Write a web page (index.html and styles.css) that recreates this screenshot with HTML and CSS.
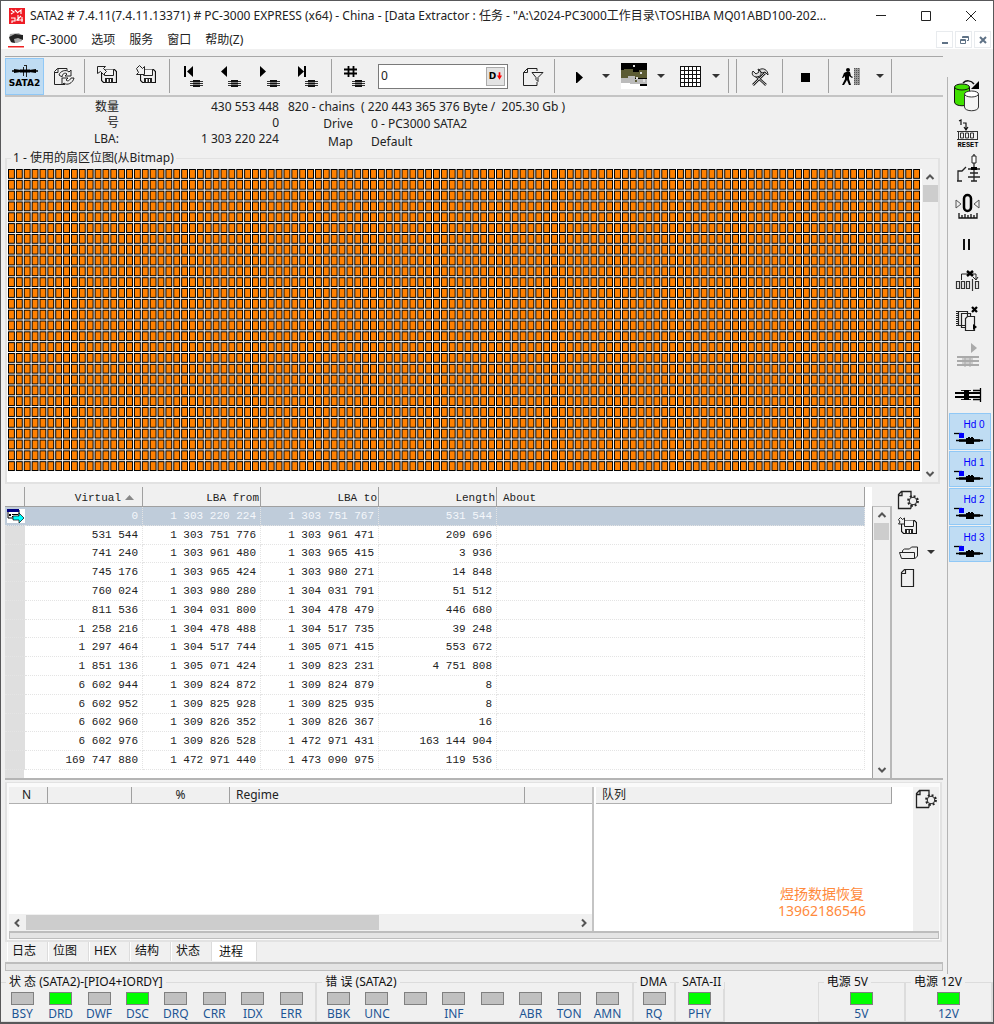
FILE: index.html
```html
<!DOCTYPE html>
<html lang="zh-CN">
<head>
<meta charset="utf-8">
<title>PC-3000 Data Extractor</title>
<link rel="stylesheet" href="styles.css">
</head>
<body>
<svg class="defs" aria-hidden="true">
  <defs>
    <symbol id="chip" viewBox="0 0 13 9"><path d="M0 2.500h13M0 4.500h13M0 6.500h13" stroke="#333"/><path d="M3 1h7v7H3z" fill="#111"/><path d="M3 3.500h7M3 5.500h7" stroke="#999" stroke-width=".8"/></symbol>
    <symbol id="floppy" viewBox="0 0 16 16"><path d="M.5 1.500h13l2 2v11h-13l-2-2z" fill="#f0f0f0" stroke="#111" stroke-width="1.200"/><path d="M3.500 1.500v6h9v-6" fill="#f6f6f6" stroke="#222"/><path d="M4 10h8v5H4z" fill="#222"/><path d="M6 11h1.500v3H6zM9 11h1v3H9z" fill="#fff"/></symbol>
    <symbol id="pagegear" viewBox="0 0 22 20"><path d="M14 18.500H1.500V4.500l3-3H14V7M1.500 5.500h3.500V1.500M14 15v3.500" fill="none" stroke="#222" stroke-width="1.300"/><circle cx="16" cy="11" r="4.800" fill="none" stroke="#222" stroke-width="2.200" stroke-dasharray="1.900 1.870"/><circle cx="16" cy="11" r="3.800" fill="#f0f0f0" stroke="#222"/></symbol>
    <symbol id="hdd" viewBox="0 0 30 14"><path d="M0 2.500h8" stroke="#000" stroke-width="1.300"/><path d="M2 9.500h27" stroke="#000" stroke-width="1.500"/><path d="M5 9.500h7M20 9.500h6" stroke="#000" stroke-width="2.600"/><path d="M5 2h5v5H5z" fill="#00f"/><path d="M12 7h2V6h2v1h1V6h2v1h1v6h-8z" fill="#000"/></symbol>
    <pattern id="cell" width="8" height="11" patternUnits="userSpaceOnUse"><rect width="8" height="11" fill="#fff"/><rect width="7" height="10" fill="#000"/><rect x="1" y="1" width="5" height="8" fill="#ff8000"/></pattern>
  </defs>
</svg>
<div class="window">
  <header class="titlebar">
    <svg class="app-icon" viewBox="0 0 16 16"><path d="M0 0h16v16H0z" fill="#ee1c25"/><path d="M2 2l3 2-3 2M6 2l2 2M8 5l4-3v4M2 10h4v3H3v2M9 7v6M12 8l-4 4h6M13 9v5" fill="none" stroke="#fff" stroke-width="1.100"/></svg>
    <h1>SATA2 # 7.4.11(7.4.11.13371) # PC-3000 EXPRESS (x64) - China - [Data Extractor : 任务 - "A:\2024-PC3000工作目录\TOSHIBA MQ01ABD100-202...</h1>
    <div class="window-buttons">
      <button aria-label="最小化"><svg viewBox="0 0 12 12"><path d="M1 5.500h10" stroke="#222"/></svg></button>
      <button aria-label="最大化"><svg viewBox="0 0 12 12"><path d="M1.500 1.500h9v9h-9z" fill="none" stroke="#222"/></svg></button>
      <button aria-label="关闭"><svg viewBox="0 0 12 12"><path d="M1 1l10 10M11 1L1 11" stroke="#222"/></svg></button>
    </div>
  </header>
  <nav class="menubar">
    <svg class="app-icon" viewBox="0 0 16 16"><path d="M2 2l9-1 3 3v5l-5 2H4L1 7z" fill="#aaa"/><path d="M1 5l6-3 8 1v5l-5-2-4 1 1 4-4-1z" fill="#222"/><path d="M0 14h16v1.500H0z" fill="#e22"/></svg>
    <button>PC-3000</button><button>选项</button><button>服务</button><button>窗口</button><button>帮助(Z)</button>
    <div class="mdi-buttons">
      <button aria-label="最小化子窗口"><svg viewBox="0 0 10 10"><path d="M2 8h6" stroke="#5f7286" stroke-width="2"/></svg></button>
      <button aria-label="还原子窗口"><svg viewBox="0 0 10 10"><path d="M3.500 3V1.500h6v4H8M1.500 4.500h5v4h-5zM1 5.500h6M3 2.500h6" fill="none" stroke="#5f7286"/></svg></button>
      <button aria-label="关闭子窗口"><svg viewBox="0 0 10 10"><path d="M2 2l6 6M8 2L2 8" stroke="#5f7286" stroke-width="2"/></svg></button>
    </div>
  </nav>

  <div class="middle">
    <main class="work">
      <div class="toolbar">
        <div class="group g-port">
          <button class="tool active port"><svg viewBox="0 0 26 14"><path d="M0 7h26" stroke="#000" stroke-width="1.500"/><path d="M2 5l7 1v2l-7 1zM24 5l-7 1v2l7 1z" fill="#000"/><path d="M11.500 3v9M14.500 1v12M12 1.500h3" stroke="#222"/><path d="M8 7h10" stroke="#000" stroke-width="3"/></svg><span>SATA2</span></button>
          <button class="tool" aria-label="刷新"><svg viewBox="0 0 30 30"><path d="M18 9.500V7.500H8.500l-3 3v13H16M5.500 11.500H9v-4" fill="none" stroke="#222"/><path d="M10 14c1-4 7-6 10-3l2-2v6h-6l2-2c-2-2-5 0-5 3zM25 17c-1 5-7 8-10 5l-2 2v-7h6l-2 2c2 2 4 0 5-2z" fill="#f0f0f0" stroke="#222"/></svg></button>
        </div>
        <div class="group g-save">
          <button class="tool" aria-label="保存"><svg viewBox="0 0 30 30"><use href="#floppy" x="8" y="7" width="16" height="16"/><path d="M4.500 5.500h8l-2 2 3 3-3 3-3-3-3 2z" fill="#f0f0f0" stroke="#222"/></svg></button>
          <button class="tool" aria-label="载入"><svg viewBox="0 0 30 30"><use href="#floppy" x="8" y="7" width="16" height="16"/><path d="M4.500 7.500l3-3 3 3 2-2v8h-8l2-2z" fill="#f0f0f0" stroke="#222"/></svg></button>
        </div>
        <div class="group g-nav">
          <button class="tool" aria-label="第一个"><svg viewBox="0 0 30 30"><path d="M7 5h2v11H7zM16 5v11l-6-5.500z"/><use href="#chip" x="13" y="18" width="13" height="9"/></svg></button>
          <button class="tool" aria-label="上一个"><svg viewBox="0 0 30 30"><path d="M11 5v11L5 10.500z"/><use href="#chip" x="12" y="18" width="13" height="9"/></svg></button>
          <button class="tool" aria-label="下一个"><svg viewBox="0 0 30 30"><path d="M5 5v11l6-5.500z"/><use href="#chip" x="12" y="18" width="13" height="9"/></svg></button>
          <button class="tool" aria-label="最后一个"><svg viewBox="0 0 30 30"><path d="M4 5v11l6-5.500zM10 5h2v11h-2z"/><use href="#chip" x="11" y="18" width="13" height="9"/></svg></button>
        </div>
        <div class="group g-lba">
          <button class="tool" aria-label="编号"><svg viewBox="0 0 30 30"><path d="M9.500 5v11M14.500 5v11M5 8.500h13M5 12.500h13" stroke="#000" stroke-width="1.800"/><use href="#chip" x="13" y="18" width="13" height="9"/></svg></button>
          <div class="field"><input type="text" value="0" aria-label="扇区编号"><button>D<svg viewBox="0 0 6 9"><path d="M2 0h2v4h2L3 9 0 4h2z" fill="#f00"/></svg></button></div>
          <button class="tool" aria-label="筛选"><svg viewBox="0 0 30 30"><path d="M19 10V7.500H9.500l-4 4v13H19V21M5.500 11.500h4v-4" fill="none" stroke="#222"/><path d="M14 11.500h11l-5 5v4l-2-2v-2z" fill="#f0f0f0" stroke="#222"/></svg></button>
        </div>
        <div class="group g-run">
          <button class="tool" aria-label="运行"><svg viewBox="0 0 30 30"><path d="M12 11v11h1l6-5.500-6-5.500z"/></svg></button>
          <button class="drop" aria-label="运行选项"></button>
          <button class="tool" aria-label="地图"><svg viewBox="0 0 30 30"><path d="M2 2h26v26H2z" fill="#000"/><path d="M2 9h3V8h9v3h6V9h8v8H2z" fill="#5b5b34"/><path d="M2 17h7v-2h7v3h12v5H2z" fill="#bbb"/><path d="M2 22h9v1h10v2h7v3H2z" fill="#fff"/><path d="M14 4h2v2h-2zM21 11h2v2h-2zM17 16h2v2h-2zM24 18h2v3h-2z" fill="#ddd"/><path d="M16 19h2v2h-2zM23 15h2v2h-2z" fill="#5b5b34"/></svg></button>
          <button class="drop" aria-label="地图选项"></button>
          <button class="tool" aria-label="网格"><svg viewBox="0 0 30 30"><path d="M6 5h20v20H6z" fill="#fff"/><path d="M6.500 5v21M10.500 5v21M14.500 5v21M18.500 5v21M22.500 5v21M26.500 5v21M6 5.500h21M6 9.500h21M6 13.500h21M6 17.500h21M6 21.500h21M6 25.500h21" stroke="#111"/></svg></button>
          <button class="drop" aria-label="网格选项"></button>
        </div>
        <div class="group g-gap"></div>
        <div class="group g-one"><button class="tool" aria-label="工具"><svg viewBox="0 0 30 30"><path d="M8 24L20 12M10 14l11 10" stroke="#222" stroke-width="2.500"/><path d="M8 24L20 12M11 15l10 9" stroke="#eee" stroke-width=".8"/><path d="M8 10l3 3 3-2-1-3c3 1 4 5 2 7l-3 1c-4 0-6-3-4-6zM14 9c4-3 9 0 9 5l-3-3-3 1z" fill="#ddd" stroke="#222"/></svg></button></div>
        <div class="group g-one"><button class="tool" aria-label="停止"><svg viewBox="0 0 30 30"><path d="M10 12h9v9h-9z"/></svg></button></div>
        <div class="group g-exit">
          <button class="tool" aria-label="退出"><svg viewBox="0 0 30 30"><circle cx="11" cy="9" r="2"/><path d="M9 11h4l1 4 2 1-1 1-3-2v3l2 6h-2l-2-5-3 5H5l3-6v-3l-2 2H5l2-5z"/><path d="M17 7h6v17h-6z" fill="#999"/><path d="M17.500 7v17M19.500 7v17M21.500 7v17" stroke="#555" stroke-dasharray="1 1"/></svg></button>
          <button class="drop" aria-label="退出选项"></button>
        </div>
      </div>

      <section class="info">
        <dl class="info-left"><dt>数量</dt><dd>430 553 448</dd><dt>号</dt><dd>0</dd><dt>LBA:</dt><dd>1 303 220 224</dd></dl>
        <div class="info-right">
          <p>820 - chains  ( 220 443 365 376 Byte /  205.30 Gb )</p>
          <dl><dt>Drive</dt><dd>0 - PC3000 SATA2</dd><dt>Map</dt><dd>Default</dd></dl>
        </div>
      </section>

      <fieldset class="bitmap">
        <legend>1 - 使用的扇区位图(从Bitmap)</legend>
        <div class="bitmap-body">
          <div class="cells"><svg viewBox="0 0 928 308" preserveAspectRatio="none" role="img" aria-label="扇区位图"><rect width="928" height="308" fill="url(#cell)"/></svg></div>
          <div class="vscroll"><svg viewBox="0 0 10 10"><path d="M1.500 7L5 3.500 8.500 7"/></svg><i></i><svg viewBox="0 0 10 10"><path d="M1.500 3L5 6.500 8.500 3"/></svg></div>
        </div>
      </fieldset>

      <section class="chains">
        <div class="table-wrap">
          <table>
            <colgroup><col class="c-mark"><col class="c-num"><col class="c-num"><col class="c-num"><col class="c-num"><col></colgroup>
            <thead><tr><th></th><th>Virtual<svg class="sort" viewBox="0 0 9 5"><path d="M0 5h9L4.500 0z" fill="#888"/></svg></th><th>LBA from</th><th>LBA to</th><th>Length</th><th>About</th></tr></thead>
            <tbody>
              <tr class="selected"><td><svg class="marker" viewBox="0 0 18 14"><path d="M0 0h18v14H0z" fill="#fff"/><path d="M1 1h11v8H1z" fill="#fff" stroke="#000"/><path d="M0 0h12v3H0z" fill="#000080"/><path d="M2 5h2v2H2zM5 5h6v1H5zM5 7h6v1H5z"/><path d="M6 7h6V4l5 5-5 5v-3H6z" fill="#0ff" stroke="#000" stroke-width=".7"/></svg></td><td>0</td><td>1 303 220 224</td><td>1 303 751 767</td><td>531 544</td><td></td></tr>
              <tr><td></td><td>531 544</td><td>1 303 751 776</td><td>1 303 961 471</td><td>209 696</td><td></td></tr>
              <tr><td></td><td>741 240</td><td>1 303 961 480</td><td>1 303 965 415</td><td>3 936</td><td></td></tr>
              <tr><td></td><td>745 176</td><td>1 303 965 424</td><td>1 303 980 271</td><td>14 848</td><td></td></tr>
              <tr><td></td><td>760 024</td><td>1 303 980 280</td><td>1 304 031 791</td><td>51 512</td><td></td></tr>
              <tr><td></td><td>811 536</td><td>1 304 031 800</td><td>1 304 478 479</td><td>446 680</td><td></td></tr>
              <tr><td></td><td>1 258 216</td><td>1 304 478 488</td><td>1 304 517 735</td><td>39 248</td><td></td></tr>
              <tr><td></td><td>1 297 464</td><td>1 304 517 744</td><td>1 305 071 415</td><td>553 672</td><td></td></tr>
              <tr><td></td><td>1 851 136</td><td>1 305 071 424</td><td>1 309 823 231</td><td>4 751 808</td><td></td></tr>
              <tr><td></td><td>6 602 944</td><td>1 309 824 872</td><td>1 309 824 879</td><td>8</td><td></td></tr>
              <tr><td></td><td>6 602 952</td><td>1 309 825 928</td><td>1 309 825 935</td><td>8</td><td></td></tr>
              <tr><td></td><td>6 602 960</td><td>1 309 826 352</td><td>1 309 826 367</td><td>16</td><td></td></tr>
              <tr><td></td><td>6 602 976</td><td>1 309 826 528</td><td>1 472 971 431</td><td>163 144 904</td><td></td></tr>
              <tr><td></td><td>169 747 880</td><td>1 472 971 440</td><td>1 473 090 975</td><td>119 536</td><td></td></tr>
            </tbody>
          </table>
        </div>
        <div class="chain-scroll vscroll"><svg viewBox="0 0 10 10"><path d="M1.500 7L5 3.500 8.500 7"/></svg><i></i><svg viewBox="0 0 10 10"><path d="M1.500 3L5 6.500 8.500 3"/></svg></div>
        <div class="side-tools">
          <button aria-label="新建"><svg viewBox="0 0 22 20"><use href="#pagegear"/></svg></button>
          <button aria-label="载入链表"><svg viewBox="0 0 22 20"><use href="#floppy" x="4" y="3" width="16" height="16"/><path d="M1.500 3.500l2-2 2 2 2-1.500v6h-6l1.500-2z" fill="#f0f0f0" stroke="#222"/></svg></button>
          <button aria-label="打开"><svg viewBox="0 0 22 20"><path d="M5.500 10V8.500l2-1.500h5l2-2h6v9l-3 3" fill="none" stroke="#222"/><path d="M2.500 10.500h15v6h-13z" fill="none" stroke="#222"/></svg><span class="caret"></span></button>
          <button aria-label="空白页"><svg viewBox="0 0 22 20"><path d="M4.500 18.500v-14l3-3h9v17zM5 5.500h3.500V2" fill="none" stroke="#222" stroke-width="1.200"/></svg></button>
        </div>
      </section>

      <section class="process">
        <div class="lists">
          <div class="list jobs">
            <div class="list-head"><span>N</span><span></span><span>%</span><span>Regime</span><span></span></div>
            <div class="list-body"></div>
            <div class="hscroll"><svg viewBox="0 0 10 10"><path d="M7 1.500L3.500 5 7 8.500"/></svg><i></i><svg viewBox="0 0 10 10"><path d="M3 1.500L6.500 5 3 8.500"/></svg></div>
          </div>
          <div class="list queue">
            <div class="list-head"><span>队列</span></div>
            <div class="list-body"><p>煜扬数据恢复<br>13962186546</p></div>
          </div>
          <div class="queue-tools"><button aria-label="新建任务"><svg viewBox="0 0 22 20"><use href="#pagegear"/></svg></button></div>
        </div>
        <div class="splitter"></div>
      </section>

      <div class="tabs" role="tablist">
        <button role="tab">日志</button><button role="tab">位图</button><button role="tab">HEX</button><button role="tab">结构</button><button role="tab">状态</button><button role="tab" aria-selected="true">进程</button>
      </div>
      <div class="splitter"></div>
    </main>

    <aside class="rail">
      <div class="rail-list">
        <button aria-label="复制磁盘"><svg viewBox="0 0 42 36"><path d="M5.500 9v15c0 5 15 5 15 0V9" fill="#40e000" stroke="#111"/><ellipse cx="13" cy="9" rx="7.500" ry="3" fill="#40e000" stroke="#111"/><path d="M15.500 16v13c0 5 14 5 14 0V16" fill="#f4f4f4" stroke="#333"/><ellipse cx="22.500" cy="16" rx="7" ry="3" fill="#fff" stroke="#333"/><path d="M14 5c3-3 8-3 11 1" fill="none" stroke="#111" stroke-width="1.500"/><path d="M30 3v8h-8z"/></svg></button>
        <button aria-label="复位"><svg viewBox="0 0 42 36"><path d="M10 6l2-1v5M14 8h3v6M15 12l2 3 2-3" fill="none" stroke="#111" stroke-width="1.200"/><path d="M8 16.500h21M8 24.500h21M9.500 16v8M28.500 16v8" stroke="#333"/><path d="M11.500 18h3v5h-3zM16.500 18h3v5h-3zM21.500 18h3v5h-3z" fill="none" stroke="#333"/><text x="19" y="32" text-anchor="middle" class="reset-text">RESET</text></svg></button>
        <button aria-label="电源"><svg viewBox="0 0 42 36"><path d="M9 29v-10h4l4-4M8 29h5M25 2v3M25 11v18M19 17h12M21 21h8M19 25h12M22 29h6" stroke="#222" fill="none" stroke-width="1.300"/><path d="M23 4h4v7h-4z" fill="#fff" stroke="#222"/><path d="M22 15h6v3h-6z"/></svg></button>
        <button aria-label="校准"><svg viewBox="0 0 42 36"><rect x="15" y="5" width="7" height="16" rx="3.500" fill="none" stroke="#000" stroke-width="2.500"/><path d="M7 10l5 4-5 4zM30 10l-5 4 5 4z" fill="#eee" stroke="#555"/><path d="M10 23v5h18v-5M13 25v3M16 24v4M19 25v3M22 24v4M25 25v3" fill="none" stroke="#111" stroke-width="1.300"/></svg></button>
        <button aria-label="暂停"><svg viewBox="0 0 42 36"><path d="M14 12h2v11h-2zM19 12h2v11h-2z" fill="#111"/></svg></button>
        <button aria-label="跳过"><svg viewBox="0 0 42 36"><path d="M12.500 15V9H27v5M24 12l3 3 2-3" fill="none" stroke="#222"/><path d="M18 6l6 5M24 6l-6 5" stroke="#000" stroke-width="2.500"/><path d="M7.500 16.500h3v7h-3zM12.500 16.500h3v7h-3zM17.500 16.500h3v7h-3zM26.500 16.500h3v7h-3zM23.500 14v12" fill="none" stroke="#333" stroke-width="1.200"/></svg></button>
        <button aria-label="清除副本"><svg viewBox="0 0 42 36"><path d="M9.500 9.500h9v14h-9zM12.500 11.500h9v14h-9z" fill="#f0f0f0" stroke="#222" stroke-width="1.200"/><path d="M16.500 28.500v-12l2-2h7v14z" fill="#f0f0f0" stroke="#222" stroke-width="1.200"/><path d="M8 9v16" stroke="#222" stroke-width="2" stroke-dasharray="1 1"/><path d="M23 5l5 5M28 5l-5 5" stroke="#000" stroke-width="2.300"/><path d="M24 22l4 3-4 3z"/></svg></button>
        <button aria-label="开始" disabled><svg viewBox="0 0 42 36"><path d="M22 4v10l6-5z" fill="#aaa"/><path d="M8 18h22M8 22h22M8 26h22" stroke="#aaa" stroke-width="2"/><path d="M13 20h11M13 24h11" stroke="#aaa"/><path d="M16 17v11M21 17v11" stroke="#aaa"/></svg></button>
        <button aria-label="连接"><svg viewBox="0 0 42 36"><path d="M6 16h26M6 20h26" stroke="#000" stroke-width="2"/><path d="M12 13.500h10M12 22.500h10" stroke="#222"/><path d="M15 13h5v10h-5z"/><path d="M24 13.500h8M24 22.500h8M31.500 11v14" stroke="#000" stroke-width="1.300"/></svg></button>
        <button class="head"><span>Hd 0</span><svg viewBox="0 0 30 14"><use href="#hdd"/></svg></button>
        <button class="head"><span>Hd 1</span><svg viewBox="0 0 30 14"><use href="#hdd"/></svg></button>
        <button class="head"><span>Hd 2</span><svg viewBox="0 0 30 14"><use href="#hdd"/></svg></button>
        <button class="head"><span>Hd 3</span><svg viewBox="0 0 30 14"><use href="#hdd"/></svg></button>
      </div>
    </aside>
  </div>

  <footer class="status">
    <fieldset class="s-eight"><legend>状 态 (SATA2)-[PIO4+IORDY]</legend>
      <div class="leds"><span class="led">BSY</span><span class="led on">DRD</span><span class="led">DWF</span><span class="led on">DSC</span><span class="led">DRQ</span><span class="led">CRR</span><span class="led">IDX</span><span class="led">ERR</span></div></fieldset>
    <fieldset class="s-eight"><legend>错 误 (SATA2)</legend>
      <div class="leds"><span class="led">BBK</span><span class="led">UNC</span><span class="led"></span><span class="led">INF</span><span class="led"></span><span class="led">ABR</span><span class="led">TON</span><span class="led">AMN</span></div></fieldset>
    <fieldset class="s-dma"><legend>DMA</legend><div class="leds"><span class="led">RQ</span></div></fieldset>
    <fieldset class="s-sata"><legend>SATA-II</legend><div class="leds"><span class="led on">PHY</span></div></fieldset>
    <fieldset class="s-power first"><legend>电源 5V</legend><div class="leds"><span class="led on">5V</span></div></fieldset>
    <fieldset class="s-power"><legend>电源 12V</legend><div class="leds"><span class="led on">12V</span></div></fieldset>
  </footer>
</div>
</body>
</html>
```
FILE: styles.css
```css
* { box-sizing: border-box; }
body {
  margin: 0;
  background: #f0f0f0;
  color: #222;
  font: 12px/16px "Noto Sans", "Noto Sans CJK SC", sans-serif;
}
button, input { font: inherit; color: inherit; margin: 0; padding: 0; }
button { border: 0; background: none; }
dl, dd, p, h1 { margin: 0; }
svg { display: block; flex: none; }
fieldset { margin: 0; min-width: 0; }
.defs { position: absolute; width: 0; height: 0; }

.window {
  min-height: 100vh;
  display: flex;
  flex-direction: column;
  border: 1px solid #58585a;
  border-bottom-width: 2px;
}

/* title and menu */
.titlebar { display: flex; align-items: center; height: 29px; padding-left: 8px; background: #fff; }
.app-icon { width: 16px; height: 16px; }
h1 { flex: 1; min-width: 0; margin-left: 5px; font-size: 12px; font-weight: 400; white-space: nowrap; overflow: hidden; }
.window-buttons { display: flex; }
.window-buttons button { width: 45px; height: 28px; display: grid; place-items: center; }
.window-buttons svg { width: 12px; height: 12px; }
.menubar { display: flex; align-items: center; height: 19px; padding-left: 7px; background: #fff; }
.menubar > button { margin-right: 14px; white-space: nowrap; }
.menubar > .app-icon { margin-right: 7px; }
.mdi-buttons { display: flex; gap: 2px; margin-left: auto; padding-right: 2px; }
.mdi-buttons button { width: 17px; height: 17px; border: 1px solid #e8ebee; display: grid; place-items: center; }
.mdi-buttons svg { width: 10px; height: 10px; }

.middle { flex: 1; display: flex; }
.work { flex: 1; min-width: 0; display: flex; flex-direction: column; padding: 7px 1px 0 4px; }

/* toolbar */
.toolbar { display: flex; height: 41px; border-top: 1px solid #a8a8a8; border-bottom: 2px solid #c4c4c4; padding: 1px 0; }
.group { display: flex; align-items: center; justify-content: center; border-right: 1px solid #a0a0a0; margin: 1px 0; }
.g-port { width: 80px; justify-content: flex-start; }
.g-save { width: 85px; }
.g-nav { width: 162px; }
.g-lba { width: 223px; gap: 5px; }
.g-run { width: 174px; }
.g-gap { width: 8px; }
.g-one { width: 46px; }
.g-exit { width: 63px; }
.tool { width: 39px; height: 37px; display: grid; place-items: center; flex: none; }
.tool svg { width: 30px; height: 30px; }
.tool.active { background: #bfdcf3; border: 1px solid #90c8f6; }
.tool.port { align-content: center; font: bold 9px/10px "DejaVu Sans", sans-serif; color: #000; }
.tool.port svg { width: 26px; height: 14px; }
.drop { width: 16px; height: 36px; display: grid; place-items: center; }
.drop::before, .caret { content: ""; border: 4px solid transparent; border-top-color: #333; border-bottom-width: 0; }
.field { display: flex; align-items: center; width: 130px; height: 25px; border: 1px solid #7a7a7a; background: #fff; padding: 2px; }
.field input { flex: 1; min-width: 0; border: 0; background: none; outline: 0; }
.field button { display: flex; align-items: center; justify-content: center; gap: 1px; width: 19px; height: 19px; background: #e3e3e3; border: 1px solid #aaa; font: bold 9px/10px "DejaVu Sans", sans-serif; color: #000; }
.field svg { width: 5px; height: 8px; }

/* summary */
.info { display: flex; gap: 9px; height: 53px; padding-top: 2px; }
.info-left { display: grid; grid-template-columns: 114px 160px; align-content: start; text-align: right; }
.info-left > * { height: 16px; }
.info-right { line-height: 18px; }
.info-right p { white-space: pre; line-height: 16px; }
.info-right dl { display: grid; grid-template-columns: 65px auto; column-gap: 18px; }
.info-right dt { text-align: right; }

/* sector bitmap */
.bitmap { border: 2px solid #e2e2e2; border-top-width: 1px; margin-right: 3px; padding: 0; }
.bitmap legend { margin-left: 4px; padding: 0 2px; white-space: nowrap; }
.bitmap-body { display: flex; padding-top: 3px; }
.cells { flex: 1; min-width: 0; background: #fff; padding: 0 1px 10px 1px; }
.cells svg { width: 100%; height: 303px; }
.vscroll { width: 16px; display: flex; flex-direction: column; align-items: center; padding: 3px 0; background: #f0f0f0; }
.vscroll i { width: 15px; height: 17px; margin-top: 3px; background: #cdcdcd; }
.vscroll svg, .hscroll svg { width: 10px; height: 10px; fill: none; stroke: #555; stroke-width: 2; }
.vscroll svg:last-child { margin-top: auto; }

/* chain table */
.chains { display: flex; height: 293px; margin-top: 3px; border-bottom: 2px solid #b4b4b4; }
.table-wrap { flex: 1; min-width: 0; background: linear-gradient(#dfdfdf, #dfdfdf) 0 0 / 19px 100% no-repeat #fff; padding-right: 7px; }
table { width: 100%; height: 283px; table-layout: fixed; border-collapse: separate; border-spacing: 0; font: 11px/14px "Liberation Mono", monospace; }
.c-mark { width: 20px; }
.c-num { width: 118px; }
th, td { padding: 0 4px 0 0; text-align: right; white-space: nowrap; }
th { height: 20px; font-weight: 400; padding: 2px 1px 0 0; background: #f0f0f0; border-right: 1px solid #a0a0a0; border-bottom: 1px solid #a0a0a0; }
th:nth-child(2) { padding-right: 8px; }
th:last-child { text-align: left; padding-left: 6px; }
td { border-right: 1px dotted #e4e4e4; border-bottom: 1px dotted #e4e4e4; }
td:first-child { background: #dfdfdf; border-right: 0; padding: 0; }
.selected td, .selected td:first-child { background: #bfccda; color: #f4f7fa; }
.sort { display: inline-block; width: 9px; height: 5px; margin-left: 4px; vertical-align: 1px; }
.marker { width: 18px; height: 14px; margin-left: 2px; }
.chain-scroll { width: 20px; margin-top: 19px; border-left: 1px solid #a0a0a0; border-top: 1px solid #c0c0c0; border-right: 2px solid #b8b8b8; }
.side-tools { width: 51px; padding: 3px 0 0 5px; }
.side-tools button { display: flex; align-items: center; gap: 2px; height: 26px; padding-bottom: 6px; }
.side-tools svg, .queue-tools svg { width: 22px; height: 20px; }
.side-tools .caret { margin-left: 6px; }

/* process panel */
.process { border: 2px solid #e2e2e2; border-top-width: 1px; margin: 2px 1px 0 0; padding: 4px 1px 1px 2px; background: #fafafa; }
.lists { display: flex; height: 144px; }
.list { display: flex; flex-direction: column; background: #fff; }
.jobs { flex: 585; border-right: 2px solid #c4c4c4; }
.queue { flex: 318; padding-left: 2px; }
.list-head { display: flex; height: 17px; background: #f0f0f0; border-bottom: 1px solid #b0b0b0; }
.list-head span { border-right: 1px solid #a0a0a0; text-align: center; }
.jobs .list-head span:nth-child(1) { width: 39px; padding-right: 3px; }
.jobs .list-head span:nth-child(2) { width: 84px; }
.jobs .list-head span:nth-child(3) { width: 98px; }
.jobs .list-head span:nth-child(4) { width: 295px; text-align: left; padding-left: 6px; }
.jobs .list-head span:nth-child(5) { flex: 1; border-right: 0; }
.queue .list-head span { flex: 1; text-align: left; padding-left: 6px; }
.queue .list-head { margin-right: 21px; }
.list-body { flex: 1; }
.queue .list-body { display: flex; justify-content: flex-end; align-items: flex-end; padding: 0 47px 12px 0; color: #ff8a3c; font-size: 14px; line-height: 17px; text-align: center; }
.hscroll { display: flex; align-items: center; height: 17px; padding: 0 3px; background: #f0f0f0; }
.hscroll i { width: 353px; height: 15px; margin-left: 4px; background: #cdcdcd; }
.hscroll svg:last-child { margin-left: auto; }
.queue-tools { width: 26px; background: #f0f0f0; padding: 2px 0 0 2px; }
.splitter { height: 9px; background: #e4e4e4; border: 1px solid #bdbdbd; border-width: 2px 1px 1px; }
.process .splitter { height: 8px; }

/* tabs */
.tabs { display: flex; height: 20px; margin-left: 2px; }
.tabs button { height: 19px; padding: 0 0 2px 4px; border-left: 1px solid #fff; border-right: 1px solid #dcdcdc; width: 41px; text-align: left; color: #111; white-space: nowrap; }
.tabs button[aria-selected="true"] { width: 45px; background: #fff; padding: 1px 0 0 6px; }

/* right rail */
.rail { width: 49px; padding-top: 28px; }
.rail-list { display: grid; grid-template-rows: repeat(13, 1fr); height: 897px; padding: 0 2px 411px 1px; margin-left: 3px; border-left: 1px solid #b4b4b4; }
.rail button { display: block; min-height: 0; overflow: hidden; }
.rail svg { width: 42px; height: 36px; }
.reset-text { font: bold 7px "Liberation Mono", monospace; }
.rail .head { background: #bfdcf3; border: 1px solid #90c8f6; color: #00f; font: 10px/14px "Liberation Sans", sans-serif; margin-bottom: 1px; padding: 5px 0 0 4px; display: flex; flex-direction: column; justify-content: flex-start; }
.rail .head span { align-self: center; padding-left: 4px; line-height: 12px; }
.rail .head svg { width: 30px; height: 14px; }

/* status */
.status { display: flex; height: 47px; }
.status fieldset { border: 1px solid #dcdcdc; border-right-width: 2px; border-left: 0; padding: 0; }
.status legend { margin-left: 5px; padding: 0 3px; line-height: 14px; height: 14px; white-space: nowrap; color: #111; }
.s-eight { flex: 325 1 0; }
.s-dma { flex: 42 1 0; }
.s-sata { flex: 48 1 0; }
.s-power { flex: 88 1 0; }
.status .s-dma legend, .status .s-sata legend { margin-left: 3px; }
.status .first { margin-left: 93px; border-left: 1px solid #dcdcdc; }
.leds { display: flex; padding: 3px 5px 0 2px; }
.s-power .leds, .s-dma .leds, .s-sata .leds { padding: 3px 0 0; }
.led { flex: 1 1 0; display: flex; flex-direction: column; align-items: center; line-height: 16px; color: #1d5594; }
.led::before { content: ""; width: 21px; height: 11px; margin-bottom: 1px; background: #c0c0c0; border: 1px solid #808080; flex: none; }
.led.on::before { background: #0f0; }
```
